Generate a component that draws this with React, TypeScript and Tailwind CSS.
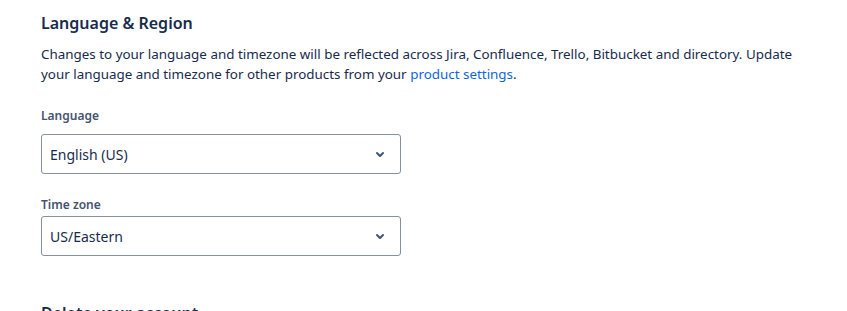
function Chevron() {
  return (
    <svg className="h-6 w-6 shrink-0 text-[#44546F]" viewBox="0 0 24 24" fill="currentColor" aria-hidden>
      <path d="M8.292 10.293a1.01 1.01 0 0 0 0 1.419l2.939 2.965c.218.215.5.322.779.322s.556-.107.769-.322l2.93-2.955a1.01 1.01 0 0 0 0-1.419.987.987 0 0 0-1.406 0l-2.298 2.317-2.307-2.327a.99.99 0 0 0-1.406 0z" />
    </svg>
  );
}

function SelectBox({ value }: { value: string }) {
  return (
    <div className="flex h-10 w-[360px] items-center justify-between rounded-[3px] border border-[#8590A2] bg-white pl-2 pr-2">
      <span className="text-[14px] text-[#172B4D]">{value}</span>
      <Chevron />
    </div>
  );
}

export default function App() {
  return (
    <div className="min-h-[311px] overflow-hidden bg-white pl-[41px] pt-[11px] font-['Segoe_UI','Noto_Sans',sans-serif] text-[#172B4D]">
      <h2 className="text-[16px] font-semibold leading-6">Language &amp; Region</h2>
      <p className="mt-[9px] max-w-[770px] text-[13.4px] leading-5 text-[#172B4D]">
        Changes to your language and timezone will be reflected across Jira, Confluence, Trello, Bitbucket and directory. Update
        your language and timezone for other products from your{" "}
        <a href="#" className="text-[#0C66E4]">product settings</a>.
      </p>

      <label className="mt-[24px] block text-[12px] font-semibold leading-4 text-[#44546F]">Language</label>
      <div className="mt-[10px]">
        <SelectBox value="English (US)" />
      </div>

      <label className="mt-[23px] block text-[12px] font-semibold leading-4 text-[#44546F]">Time zone</label>
      <div className="mt-[3px]">
        <SelectBox value="US/Eastern" />
      </div>

      <h2 className="mt-[45px] text-[16px] font-semibold leading-6">Delete your account</h2>
    </div>
  );
}
